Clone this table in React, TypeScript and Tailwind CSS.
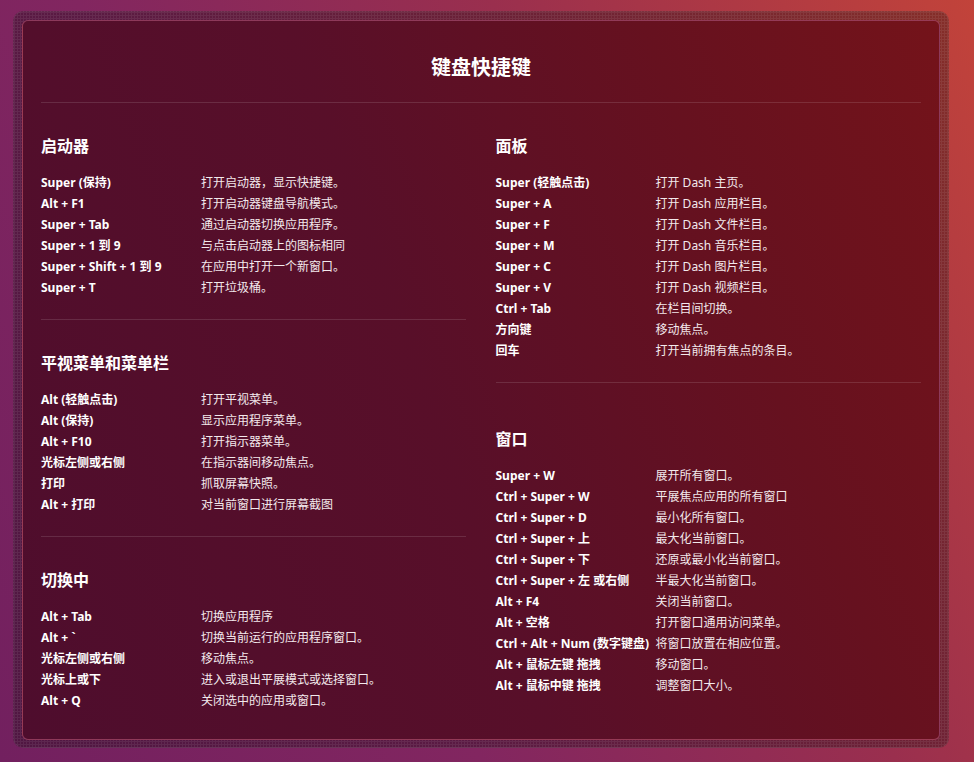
const FONT = "font-['Noto_Sans','Noto_Sans_CJK_SC',sans-serif]";

type Row = [string, string];

const launcher: Row[] = [
  ['Super (保持)', '打开启动器，显示快捷键。'],
  ['Alt + F1', '打开启动器键盘导航模式。'],
  ['Super + Tab', '通过启动器切换应用程序。'],
  ['Super + 1 到 9', '与点击启动器上的图标相同'],
  ['Super + Shift + 1 到 9', '在应用中打开一个新窗口。'],
  ['Super + T', '打开垃圾桶。'],
];

const hud: Row[] = [
  ['Alt (轻触点击)', '打开平视菜单。'],
  ['Alt (保持)', '显示应用程序菜单。'],
  ['Alt + F10', '打开指示器菜单。'],
  ['光标左侧或右侧', '在指示器间移动焦点。'],
  ['打印', '抓取屏幕快照。'],
  ['Alt + 打印', '对当前窗口进行屏幕截图'],
];

const switching: Row[] = [
  ['Alt + Tab', '切换应用程序'],
  ['Alt + `', '切换当前运行的应用程序窗口。'],
  ['光标左侧或右侧', '移动焦点。'],
  ['光标上或下', '进入或退出平展模式或选择窗口。'],
  ['Alt + Q', '关闭选中的应用或窗口。'],
];

const dash: Row[] = [
  ['Super (轻触点击)', '打开 Dash 主页。'],
  ['Super + A', '打开 Dash 应用栏目。'],
  ['Super + F', '打开 Dash 文件栏目。'],
  ['Super + M', '打开 Dash 音乐栏目。'],
  ['Super + C', '打开 Dash 图片栏目。'],
  ['Super + V', '打开 Dash 视频栏目。'],
  ['Ctrl + Tab', '在栏目间切换。'],
  ['方向键', '移动焦点。'],
  ['回车', '打开当前拥有焦点的条目。'],
];

const windows: Row[] = [
  ['Super + W', '展开所有窗口。'],
  ['Ctrl + Super + W', '平展焦点应用的所有窗口'],
  ['Ctrl + Super + D', '最小化所有窗口。'],
  ['Ctrl + Super + 上', '最大化当前窗口。'],
  ['Ctrl + Super + 下', '还原或最小化当前窗口。'],
  ['Ctrl + Super + 左 或右侧', '半最大化当前窗口。'],
  ['Alt + F4', '关闭当前窗口。'],
  ['Alt + 空格', '打开窗口通用访问菜单。'],
  ['Ctrl + Alt + Num (数字键盘)', '将窗口放置在相应位置。'],
  ['Alt + 鼠标左键 拖拽', '移动窗口。'],
  ['Alt + 鼠标中键 拖拽', '调整窗口大小。'],
];

const Section = ({ title, rows }: { title: string; rows: Row[] }) => (
  <div>
    <h2 className="h-[22px] text-[16px] font-bold leading-[22px] text-white">{title}</h2>
    <div className="mt-[15px]">
      {rows.map(([key, desc]) => (
        <div key={key + desc} className="flex h-[21px] items-center text-[12px] leading-[21px]">
          <span className="w-[160px] shrink-0 whitespace-nowrap font-bold text-white">{key}</span>
          <span className="whitespace-nowrap text-[#f3e9ec]">{desc}</span>
        </div>
      ))}
    </div>
  </div>
);

const Divider = () => <div className="mt-[21px] h-px bg-white/[0.12]" />;

export default function App() {
  return (
    <div
      className={`${FONT} h-[762px] w-[974px] overflow-hidden bg-[linear-gradient(62deg,#72205f_0%,#822660_35%,#9a2f4e_65%,#c2433a_100%)] pl-[13px] pt-[11px]`}
    >
      <div className="h-[737px] w-[936px] rounded-[10px] bg-black/30 bg-[radial-gradient(rgba(255,255,255,0.07)_1px,transparent_1.2px)] bg-[length:3px_3px] p-[9px] pb-[8px] shadow-[inset_0_0_0_1px_rgba(255,255,255,0.06)]">
        <div className="h-[720px] w-[918px] rounded-[6px] border border-[#b5577a]/60 bg-[linear-gradient(70deg,#4e0d2d_0%,#580f29_45%,#66111f_75%,#74131a_100%)] px-[18px]">
          <h1 className="pt-[33px] text-center text-[20px] font-bold leading-[28px] text-white">键盘快捷键</h1>
          <div className="mt-[20px] h-px bg-white/[0.12]" />
          <div className="flex gap-[30px] pt-[32px]">
            <div className="w-[425px]">
              <Section title="启动器" rows={launcher} />
              <Divider />
              <div className="mt-[32px]">
                <Section title="平视菜单和菜单栏" rows={hud} />
              </div>
              <Divider />
              <div className="mt-[32px]">
                <Section title="切换中" rows={switching} />
              </div>
            </div>
            <div className="w-[426px]">
              <Section title="面板" rows={dash} />
              <Divider />
              <div className="mt-[45px]">
                <Section title="窗口" rows={windows} />
              </div>
            </div>
          </div>
        </div>
      </div>
    </div>
  );
}
